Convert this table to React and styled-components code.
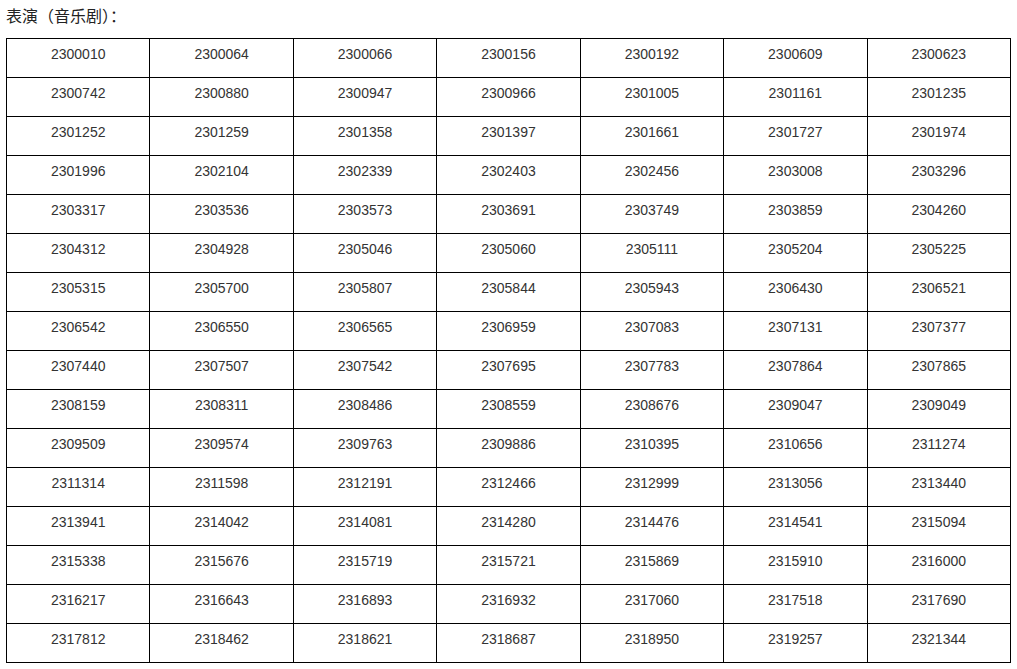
import React from "react";
import styled, { createGlobalStyle } from "styled-components";

const GlobalStyle = createGlobalStyle`
  html, body {
    margin: 0;
    padding: 0;
    background: #fff;
  }
`;

const Page = styled.div`
  padding: 0 6px;
`;

const Title = styled.div`
  height: 30px;
  line-height: 30px;
  margin-bottom: 8px;
  font-family: "Noto Sans CJK SC", "Noto Sans", sans-serif;
  font-size: 16px;
  color: #222;
`;

const Table = styled.table`
  width: 1005px;
  border-collapse: collapse;
  table-layout: fixed;
`;

const Cell = styled.td`
  box-sizing: border-box;
  height: 39px;
  padding: 6px 0 0 0;
  border: 1px solid #000;
  vertical-align: top;
  text-align: center;
  font-family: "Liberation Sans", Arial, sans-serif;
  font-size: 14px;
  line-height: 18px;
  color: #333;
`;

const rows = [
  ["2300010", "2300064", "2300066", "2300156", "2300192", "2300609", "2300623"],
  ["2300742", "2300880", "2300947", "2300966", "2301005", "2301161", "2301235"],
  ["2301252", "2301259", "2301358", "2301397", "2301661", "2301727", "2301974"],
  ["2301996", "2302104", "2302339", "2302403", "2302456", "2303008", "2303296"],
  ["2303317", "2303536", "2303573", "2303691", "2303749", "2303859", "2304260"],
  ["2304312", "2304928", "2305046", "2305060", "2305111", "2305204", "2305225"],
  ["2305315", "2305700", "2305807", "2305844", "2305943", "2306430", "2306521"],
  ["2306542", "2306550", "2306565", "2306959", "2307083", "2307131", "2307377"],
  ["2307440", "2307507", "2307542", "2307695", "2307783", "2307864", "2307865"],
  ["2308159", "2308311", "2308486", "2308559", "2308676", "2309047", "2309049"],
  ["2309509", "2309574", "2309763", "2309886", "2310395", "2310656", "2311274"],
  ["2311314", "2311598", "2312191", "2312466", "2312999", "2313056", "2313440"],
  ["2313941", "2314042", "2314081", "2314280", "2314476", "2314541", "2315094"],
  ["2315338", "2315676", "2315719", "2315721", "2315869", "2315910", "2316000"],
  ["2316217", "2316643", "2316893", "2316932", "2317060", "2317518", "2317690"],
  ["2317812", "2318462", "2318621", "2318687", "2318950", "2319257", "2321344"],
];

export default function App() {
  return (
    <Page>
      <GlobalStyle />
      <Title>表演（音乐剧）：</Title>
      <Table>
        <tbody>
          {rows.map((row, i) => (
            <tr key={i}>
              {row.map(num => (
                <Cell key={num}>{num}</Cell>
              ))}
            </tr>
          ))}
        </tbody>
      </Table>
    </Page>
  );
}
